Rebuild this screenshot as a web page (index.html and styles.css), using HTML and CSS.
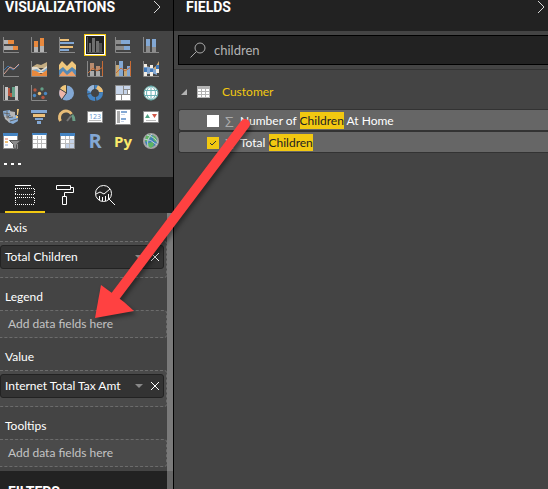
FILE: index.html
```html
<!DOCTYPE html>
<html lang="en">
<head>
<meta charset="utf-8">
<title>Report panes</title>
<link rel="stylesheet" href="styles.css">
</head>
<body>
<div class="app">
  <aside class="viz">
    <header class="pane-header">
      <h1>VISUALIZATIONS</h1>
      <button class="collapse" aria-label="Collapse visualizations"><svg width="8" height="14" viewBox="0 0 8 14"><path d="M1 1l6 6-6 6"/></svg></button>
    </header>
    <div class="gallery">
      <button aria-label="Stacked bar chart"><svg viewBox="0 0 22 22"><path class="axis" d="M3.500 3v15.500h15.500"/><path fill="#b3b3b3" d="M4 6h4v4H4zM4 12h9v4H4z"/><path fill="#e8893e" d="M8 6h6v4H8zM13 12h5v4h-5z"/></svg></button>
      <button aria-label="Stacked column chart"><svg viewBox="0 0 22 22"><path class="axis" d="M3.500 3v15.500h15.500"/><path fill="#b3b3b3" d="M6 13h4v5H6zM12 12h4v6h-4z"/><path fill="#e8893e" d="M6 7h4v6H6zM12 4h4v8h-4z"/></svg></button>
      <button aria-label="Clustered bar chart"><svg viewBox="0 0 22 22"><path class="axis" d="M3.500 3v15.500h15.500"/><path fill="#eec078" d="M4 5h9v2H4zM4 12h13v2H4z"/><path fill="#83a8d4" d="M4 8h14v2H4zM4 15h9v2H4z"/></svg></button>
      <button class="selected" aria-label="Clustered column chart"><svg viewBox="0 0 22 22"><path stroke="#555" fill="none" d="M3.500 3v15.500h15.500"/><path fill="#6e6e6e" d="M5 9h2v9H5zM8 4h3v14H8zM12 7h3v11h-3z"/><path fill="#505050" d="M15 9h3v9h-3z"/></svg></button>
      <button aria-label="100% stacked bar chart"><svg viewBox="0 0 22 22"><path class="axis" d="M3.500 3v15.500h15.500"/><path fill="#8c8c8c" d="M4 6h5v4H4zM4 12h8v4H4z"/><path fill="#83a8d4" d="M9 6h9v4H9zM12 12h6v4h-6z"/></svg></button>
      <button aria-label="100% stacked column chart"><svg viewBox="0 0 22 22"><path class="axis" d="M3.500 3v15.500h15.500"/><path fill="#8c8c8c" d="M6 12h4v6H6zM12 12h4v6h-4z"/><path fill="#83a8d4" d="M6 5h4v7H6zM12 5h4v8h-4z"/></svg></button>

      <button aria-label="Line chart"><svg viewBox="0 0 22 22"><path class="axis" d="M3.500 3v15.500h15.500"/><path fill="none" stroke="#4178b0" d="M4 12l4-4 5 4 6-5"/><path fill="none" stroke="#d9a294" d="M4 16l6-7 4 2 5-5"/></svg></button>
      <button aria-label="Area chart"><svg viewBox="0 0 22 22"><path fill="#c4ad82" d="M4 9l5-3 4 1 6-3v6H4z"/><path fill="#e4dccd" d="M4 9l5 0 4 3 6-4v7H4z"/><path fill="#76a5ca" d="M4 12l5-1 4 3 6-4v4H4z"/><path fill="#e8893e" d="M4 12l4 1 5 3 6-4v6H4z"/><path class="axis" d="M3.500 3v15.500h15.500"/></svg></button>
      <button aria-label="Stacked area chart"><svg viewBox="0 0 22 22"><path fill="#f0c77c" d="M3 7l3-4 5 5 5-5 4 4v6H3z"/><path fill="#5689b5" d="M3 12l4-3 4 4 5-4 4 3v5H3z"/><path fill="#efa16a" d="M3 18l4-5 4 4 5-4 4 5z"/><path class="axis" d="M3 18.500h17"/></svg></button>
      <button aria-label="Line and stacked column chart"><svg viewBox="0 0 22 22"><path fill="#b98c6f" d="M6 5h4v7H6zM12 8h4v4h-4z"/><path fill="#aaa" d="M6 13h4v5H6zM12 13h4v5h-4z"/><path class="axis" d="M3.500 3v15.500h15.500"/><path fill="none" stroke="#c86c36" d="M4 15l5-5 4 3 6-4M18.500 3v15"/></svg></button>
      <button aria-label="Line and clustered column chart"><svg viewBox="0 0 22 22"><path fill="#c5a877" d="M4 7h3v11H4zM12 11h3v7h-3z"/><path fill="#83a8d4" d="M7 3h4v15H7zM15 8h3v10h-3z"/><path class="axis" d="M3.500 3v15.500h15.500"/><path fill="none" stroke="#c86c36" d="M4 15l5-5 4 3 6-4M18.500 3v15"/></svg></button>
      <button aria-label="Ribbon chart"><svg viewBox="0 0 22 22"><path fill="#d6b078" d="M4 12l4-4 3 4 5-4 3-5v7l-5 3-4 3-6 0z"/><path fill="#83a8d4" d="M4 6l4 3 4 0 5 4v4l-5-2-5 1-3-4z"/><path fill="#f4eee4" d="M4 6h3v3H4zM10 7h3v3h-3zM16 11h3v4h-3zM4 14h3v4H4zM10 14h3v4h-3z"/><path fill="#427aba" d="M4 10h3v4H4zM10 11h3v3h-3zM16 7h3v4h-3z"/><path class="axis" d="M3.500 3v15.500h15.500"/></svg></button>

      <button aria-label="Waterfall chart"><svg viewBox="0 0 22 22"><path class="axis" d="M3.500 3v15.500h15.500"/><path fill="#c6c6c6" d="M5 5h3v13H5zM15 4h3v14h-3z"/><path fill="#b8563f" d="M8 6h2v8H8zM10 11h2v4h-2z"/><path fill="#64a088" d="M12 5h3v10h-3z"/></svg></button>
      <button aria-label="Scatter chart"><svg viewBox="0 0 22 22"><path class="axis" d="M3.500 3v15.500h15.500"/><circle cx="7" cy="8" r="1.700" fill="#b8563f"/><circle cx="15" cy="15.500" r="1.700" fill="#b8563f"/><circle cx="14" cy="7" r="1.700" fill="#64a088"/><circle cx="11.500" cy="11.500" r="1.700" fill="#eec078"/><circle cx="17.500" cy="11.500" r="1.700" fill="#4b88c3"/><circle cx="6.500" cy="13.500" r="1.700" fill="#4b88c3"/></svg></button>
      <button aria-label="Pie chart"><svg viewBox="0 0 22 22"><circle cx="10.500" cy="11" r="7.500" fill="#83a8d4"/><path fill="#f0c77c" d="M10 11L4 7q2-4 6-4z"/><path fill="#efb5a8" d="M10 11l-4 6Q2 13 4 7z"/><path fill="none" stroke="#444" d="M10.500 3v8M4 7l6.500 4-5 7"/></svg></button>
      <button aria-label="Donut chart"><svg viewBox="0 0 22 22"><circle cx="11" cy="11" r="6" fill="none" stroke="#4584c2" stroke-width="4" stroke-dasharray="8 1"/><path fill="none" stroke="#eec078" stroke-width="4" d="M13 5q4 2 4 5"/><path fill="none" stroke="#9ab7d9" stroke-width="4" d="M5 9q2-4 5-4"/></svg></button>
      <button aria-label="Treemap"><svg viewBox="0 0 22 22"><path fill="#fff" stroke="#8b8b8b" d="M3.500 3.500h15v15h-15z"/><path fill="#c5d3e8" d="M4 4h7v8H4zM12 4h6v3h-6zM12 8h3v4h-3z"/><path fill="none" stroke="#8b8b8b" d="M4 12.500h14M11.500 4v8M9.500 13v5M12 7.500h6M15.500 8v4"/></svg></button>
      <button aria-label="Map"><svg viewBox="0 0 22 22"><circle cx="11" cy="11" r="7" fill="#fff" stroke="#62a49d"/><path fill="none" stroke="#6cb2b5" d="M4 8.500h14M4 13.500h14M11 4v14M11 4C5 7 5 15 11 18M11 4c6 3 6 11 0 14"/></svg></button>

      <button aria-label="Filled map"><svg viewBox="0 0 22 22"><path fill="#89aed6" d="M3 5l7-1 1 5-7 2zM9 10l8-1 1 6-5 3-5-2z"/><path fill="#b6b6b6" d="M9 5l6 1v5h-4zM4 9l5 2 1 6-5-4z"/><path fill="none" stroke="#666" d="M4 7l6 1M7 5v7l6-1M10 15l7-2"/><path fill="#f0c77c" d="M17 3h2l-1 6h-1zM16 10h2v2h-2z"/></svg></button>
      <button aria-label="Funnel"><svg viewBox="0 0 22 22"><path fill="#83a8d4" d="M3 4h16v3H3zM7 12h8v2H7zM9 15h4v3H9z"/><path fill="#eec078" d="M5 8h12v3H5z"/></svg></button>
      <button aria-label="Gauge"><svg viewBox="0 0 22 22"><g fill="none" stroke-width="3"><path stroke="#e8bd78" d="M4.500 15a6.500 6.500 0 0 1 11-7"/><path stroke="#699d86" d="M16 9q2 2 2 6"/><path stroke="#777" stroke-width="2" d="M11 15l4-5"/></g></svg></button>
      <button aria-label="Card"><svg viewBox="0 0 22 22"><path fill="#fff" stroke="#8b8b8b" d="M3.500 5.500h15v11h-15z"/><text x="5" y="13" font-size="7" fill="#5f91ca">123</text><path stroke="#bbb" d="M5 14.500h12"/></svg></button>
      <button aria-label="Multi-row card"><svg viewBox="0 0 22 22"><path fill="#fff" stroke="#8b8b8b" d="M3.500 3.500h15v15h-15z"/><path fill="#aaa" d="M5 5h3v12H5z"/><path stroke="#83a8d4" stroke-width="2" d="M9 6h6M9 13h5"/><path stroke="#c5d3e8" d="M9 8.500h4M9 15.500h3"/></svg></button>
      <button aria-label="KPI"><svg viewBox="0 0 22 22"><path fill="#fff" stroke="#8b8b8b" d="M3.500 5.500h15v11h-15z"/><path fill="#4ea283" d="M5 12l2.500-4 2.500 4z"/><path fill="#d05647" d="M12 8h5l-2.500 4z"/><path stroke="#bbb" d="M6 14.500h10"/></svg></button>

      <button aria-label="Slicer"><svg viewBox="0 0 22 22"><path fill="#fff" stroke="#8b8b8b" d="M3.500 3.500h14v15h-14z"/><path fill="#4584c2" d="M3 3h15v3H3z"/><path fill="#efb5a8" d="M5 8h3v2H5z"/><path fill="#eec078" d="M5 11h3v2H5z"/><path fill="#c5d3e8" d="M5 14h3v2H5z"/><path fill="#8c8c8c" stroke="#555" d="M9.500 10.500h11l-4 4v5l-3-2v-3z"/></svg></button>
      <button aria-label="Table"><svg viewBox="0 0 22 22"><path fill="#fff" stroke="#8b8b8b" d="M4.500 3.500h14v15h-14z"/><path fill="#4584c2" d="M4 3h15v2H4z"/><path fill="none" stroke="#bbb" d="M5 9.500h13M5 13.500h13M9.500 6v12M13.500 6v12"/></svg></button>
      <button aria-label="Matrix"><svg viewBox="0 0 22 22"><path fill="#fff" stroke="#8b8b8b" d="M4.500 3.500h14v15h-14z"/><path fill="#c5d3e8" d="M13 9h5v9h-5zM9 14h5v4H9z"/><path fill="#4584c2" d="M4 3h15v3H4z"/><path fill="none" stroke="#bbb" d="M5 9.500h13M5 13.500h13M9.500 6v12M13.500 6v12"/></svg></button>
      <button class="letter r" aria-label="R script visual">R</button>
      <button class="letter py" aria-label="Python visual">Py</button>
      <button aria-label="ArcGIS map"><svg viewBox="0 0 22 22"><circle cx="11" cy="11" r="7" fill="#3e7eb8" stroke="#a5a5a5" stroke-width="2"/><path fill="#5fb562" d="M6 6l4-2 1 3-4 5-2-1zM12 5l4 2 1 5-3-1zM8 13l5-1 1 3-3 3-3-2z"/><path fill="none" stroke="#bdcfd7" d="M4 9q7 0 13 6M7 5q8 2 11 8M12 4Q6 9 8 17"/></svg></button>
    </div>
    <button class="more" aria-label="More visuals"><i></i><i></i><i></i></button>
    <nav class="tabs">
      <button class="active" aria-label="Fields"><svg width="20" height="20" viewBox="0 0 20 20"><path d="M0 .5h16"/><path stroke-dasharray="1 1" d="M0 3.500h20M0 9.500h20M0 12.500h20M0 19.500h20M.5 4v6M19.500 4v6M.5 13v6M19.500 13v6"/></svg></button>
      <button aria-label="Format"><svg width="20" height="20" viewBox="0 0 20 20"><path d="M1.500.5h14v4h-14zM15.500 2.500h3v5h-9v4M7.500 11.500h4v8h-4z"/></svg></button>
      <button aria-label="Analytics"><svg width="20" height="20" viewBox="0 0 20 20"><circle cx="8.500" cy="8.500" r="8"/><path d="M14 14l6 6M1 9l4-2 4 2 6-5M4.500 11v4M7.500 12v4M10.500 11v5M13.500 9v5"/></svg></button>
    </nav>
    <div class="wells">
      <section><h2>Axis</h2><div class="well"><div class="chip"><span>Total Children</span><button class="caret" aria-label="Total Children options"></button><button class="remove" aria-label="Remove Total Children"><svg width="8" height="8" viewBox="0 0 8 8"><path d="M0 0l8 8M8 0L0 8"/></svg></button></div></div></section>
      <section><h2>Legend</h2><div class="well empty">Add data fields here</div></section>
      <section><h2>Value</h2><div class="well"><div class="chip"><span>Internet Total Tax Amt</span><button class="caret" aria-label="Internet Total Tax Amt options"></button><button class="remove" aria-label="Remove Internet Total Tax Amt"><svg width="8" height="8" viewBox="0 0 8 8"><path d="M0 0l8 8M8 0L0 8"/></svg></button></div></div></section>
      <section><h2>Tooltips</h2><div class="well empty">Add data fields here</div></section>
      <div class="filters"><h1>FILTERS</h1></div>
    </div>
  </aside>
  <main class="fields">
    <header class="pane-header">
      <h1>FIELDS</h1>
      <button class="collapse" aria-label="Collapse fields"><svg width="8" height="14" viewBox="0 0 8 14"><path d="M1 1l6 6-6 6"/></svg></button>
    </header>
    <label class="search"><svg width="16" height="16" viewBox="0 0 16 16"><circle cx="10" cy="6" r="5"/><path d="M6.500 9.500L.5 15.500"/></svg><input type="text" value="children" aria-label="Search fields"></label>
    <div class="table-name"><svg class="tri" width="6" height="6" viewBox="0 0 6 6"><path d="M6 0v6H0z"/></svg><svg width="13" height="12" viewBox="0 0 13 12"><path fill="#b3b3b3" d="M0 0h13v12H0z"/><path fill="#fff" d="M1 3h3v2H1zM5 3h3v2H5zM9 3h3v2H9zM1 6h3v2H1zM5 6h3v2H5zM9 6h3v2H9zM1 9h3v2H1zM5 9h3v2H5zM9 9h3v2H9z"/></svg><span>Customer</span></div>
    <ul class="list">
      <li><label><input type="checkbox"><i class="sigma">Σ</i><span>Number of <mark>Children</mark> At Home</span></label></li>
      <li><label><input type="checkbox" checked><i class="sigma">Σ</i><span>Total <mark>Children</mark></span></label></li>
    </ul>
  </main>
  <svg class="arrow" width="170" height="210" viewBox="0 0 170 210" aria-hidden="true"><path class="shaft" d="M155 14L24 188"/><path class="head" d="M5 208L11 175l11 8 12 9 10 9z"/></svg>
</div>
</body>
</html>
```
FILE: styles.css
```css
* { box-sizing: border-box; }
body { margin: 0; background: #444; color: #fff; font: 12px/16px Lato, "Open Sans", sans-serif; }
button { border: 0; padding: 0; margin: 0; background: none; color: inherit; font: inherit; }
svg { display: block; }
h1, h2, ul { margin: 0; padding: 0; }
.app { display: flex; height: 100vh; overflow: hidden; position: relative; }
.viz { flex: 0 0 174px; border-right: 1px solid #000; overflow: hidden; }
.fields { flex: 1; min-width: 0; }
.pane-header { display: flex; justify-content: space-between; align-items: flex-start; height: 31px; padding: 0 12px 0 5px; background: #222; }
.fields .pane-header { padding: 0 3px 0 12px; }
h1 { font: bold 14px/14px Roboto, sans-serif; }
.collapse svg { fill: none; stroke: #d8d8d8; }
.gallery { display: grid; grid-template-columns: repeat(6, 22px); grid-auto-rows: 22px; gap: 2px 6px; padding-top: 3px; }
.gallery svg { width: 22px; height: 22px; }
.gallery text { font-family: "Open Sans", sans-serif; }
.axis { fill: none; stroke: #888; }
.selected { background: #222; outline: 1px solid #fff; outline-offset: -2px; box-shadow: inset 0 0 0 1px #f2c811; }
.letter { font: bold 20px/22px "Open Sans", sans-serif; color: #83a8d4; }
.py { font-size: 15px; color: #fbe96a; }
.more { display: flex; gap: 4px; padding: 11px 4px 12px; }
.more i { width: 3px; height: 2px; background: #fff; }
.tabs { display: flex; height: 36px; background: #222; padding-left: 5px; }
.tabs button { width: 40px; padding: 8px 10px 0; border-bottom: 2px solid transparent; display: flex; align-items: flex-start; }
.tabs .active { border-color: #f2c811; }
.tabs svg { fill: none; stroke: #fff; }
.wells section { border-right: 6px solid #7a7a7a; overflow: hidden; }
h2 { font: inherit; height: 28px; padding: 7px 5px 0; }
.well { height: 37px; margin-bottom: 4px; padding: 3px 2px 0 0; border: 1px dashed #6c6c6c; border-left: 0; border-radius: 0 3px 3px 0; background: #4a4a4a; }
.empty { height: 28px; padding: 5px 8px; color: #c4c4c4; }
.chip { display: flex; align-items: center; height: 24px; padding: 0 4px; background: #333; border: 1px solid #222; border-radius: 3px; }
.chip span { flex: 1; white-space: nowrap; }
.caret { border: 4px solid transparent; border-top-color: #888; border-bottom: 0; margin-right: 8px; }
.remove svg { overflow: visible; fill: none; stroke: #fff; }
.filters { background: #222; padding: 14px 8px; height: 40px; border-right: 6px solid #666; }
.search { display: flex; align-items: center; gap: 8px; height: 30px; margin: 4px 0 4px 4px; padding-left: 11px; background: #222; border: 1px solid #000; border-right: 0; }
.search svg { fill: none; stroke: #aaa; }
.search input { flex: 1; min-width: 0; border: 0; padding: 0; background: none; color: #b3b3b3; font: inherit; font-size: 13px; outline: 0; }
.table-name { display: flex; align-items: center; height: 40px; padding: 5px 0 0 7px; border-top: 1px solid #333; color: #f2c811; }
.table-name span { margin-left: 12px; }
.tri { margin-right: 10px; fill: #b3b3b3; }
.list { list-style: none; margin-left: 4px; }
.list li { height: 22px; background: #666; border: 1px solid #333; border-right: 0; border-radius: 3px 0 0 3px; }
.list label { display: flex; align-items: center; height: 20px; padding: 2px 0 0 28px; }
.list input { appearance: none; width: 12px; height: 12px; margin: 0 6px 0 0; background: #fff; border: 1px solid #fff; }
.list input:checked { background: #f2c811 url('data:image/svg+xml,<svg xmlns="http://www.w3.org/2000/svg" viewBox="0 0 10 10"><path d="M2 5l2 2 4-4" fill="none" stroke="%23333"/></svg>'); border-color: #f2c811; }
.sigma { width: 15px; font: 15px/16px "Open Sans", sans-serif; color: #aaa; }
mark { background: #f2c811; color: #222; padding: 1px 0; }
.arrow { position: absolute; left: 90px; top: 110px; filter: drop-shadow(2px 3px 2px rgba(0,0,0,.4)); }
.shaft { stroke: #ff4141; stroke-width: 10; stroke-linecap: round; }
.head { fill: #ff4141; }
```
